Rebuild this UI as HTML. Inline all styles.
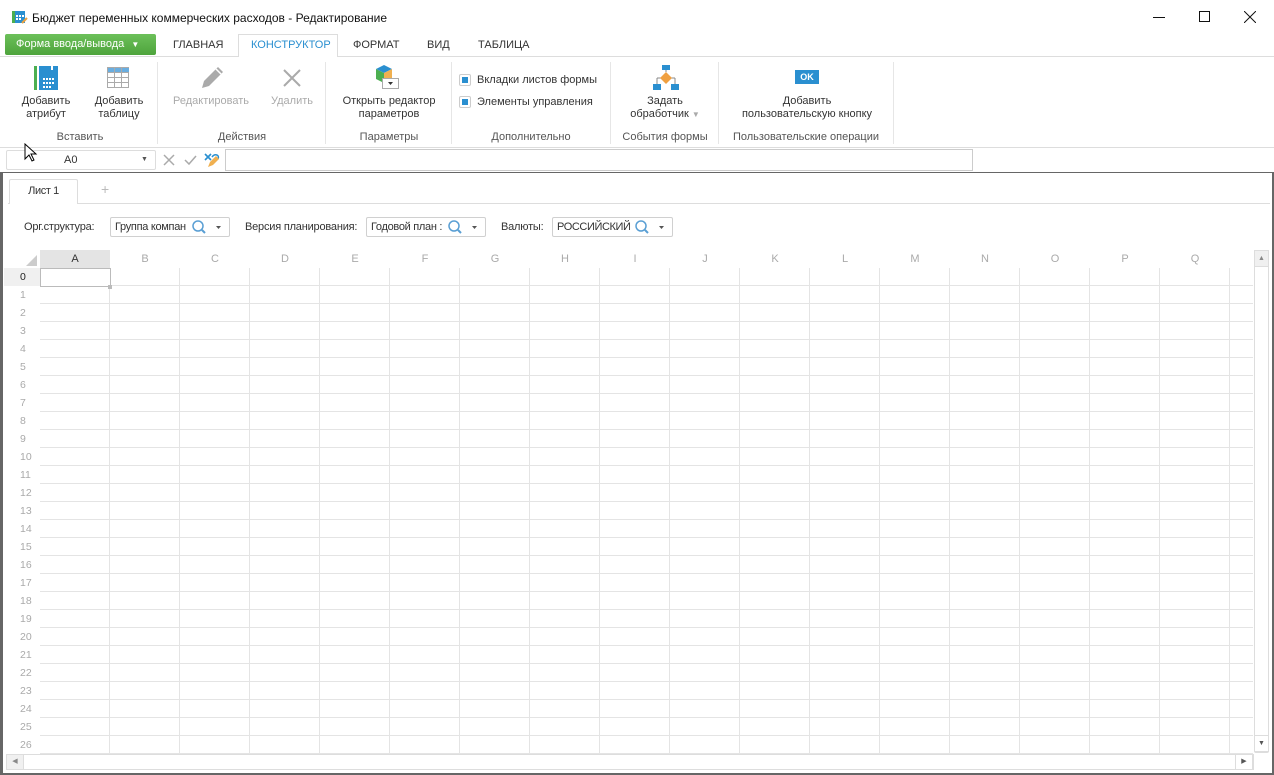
<!DOCTYPE html>
<html><head><meta charset="utf-8">
<style>
*{box-sizing:border-box;margin:0;padding:0}
body{width:1274px;height:775px;overflow:hidden;background:#fff;font-family:"Liberation Sans","DejaVu Sans",sans-serif;font-size:11px;color:#333;position:relative}
.a{position:absolute}
.t{white-space:nowrap}
.tab{position:absolute;top:39px;font-size:11px;color:#333}
.lbl{position:absolute;text-align:center;font-size:11px;color:#333;line-height:13px;white-space:nowrap}
.dis{color:#aaa}
.grp{position:absolute;top:131px;font-size:11px;color:#555;text-align:center;white-space:nowrap}
.sep{position:absolute;top:62px;width:1px;height:82px;background:#e6e6e6}
.combo{position:absolute;top:217px;height:20px;border:1px solid #d0d0d0;border-radius:2px;background:#fff;font-size:11px;line-height:18px;padding-left:4px;overflow:hidden;white-space:nowrap}
.ch{position:absolute;top:250px;height:18px;width:70px;text-align:center;line-height:18px;color:#aaa;font-size:11px}
.rh{position:absolute;left:4px;width:36px;height:18px;line-height:18px;padding-left:16px;color:#aaa;font-size:10.5px}
</style></head><body>
<svg class="a" style="left:12px;top:10px" width="16" height="14"><rect x="0" y="1" width="13" height="12" fill="#2a8fd0"/><rect x="0" y="1" width="3" height="12" fill="#4caf50"/><g fill="#fff"><rect x="4" y="5" width="2" height="2"/><rect x="7" y="5" width="2" height="2"/><rect x="10" y="5" width="2" height="2"/><rect x="4" y="8" width="2" height="2"/><rect x="7" y="8" width="2" height="2"/></g><path d="M10 13l5-5" stroke="#e8a040" stroke-width="2"/></svg>
<div class="a t" style="left:32px;top:11px;font-size:12px;color:#111">Бюджет переменных коммерческих расходов - Редактирование</div>
<div class="a" style="left:1153px;top:17px;width:12px;height:1px;background:#111"></div>
<div class="a" style="left:1199px;top:11px;width:11px;height:11px;border:1px solid #111"></div>
<svg class="a" style="left:1244px;top:11px" width="12" height="12"><path d="M0 0L12 12M12 0L0 12" stroke="#111" stroke-width="1"/></svg>
<div class="a" style="left:5px;top:34px;width:151px;height:21px;background:linear-gradient(#6cc05a,#4ea43c);border-radius:2px;color:#fff;font-size:11px;line-height:21px;padding-left:11px">Форма ввода/вывода <span style="font-size:8px;margin-left:4px">▼</span></div>
<div class="tab" style="left:173px">ГЛАВНАЯ</div>
<div class="a" style="left:238px;top:34px;width:100px;height:23px;border:1px solid #ddd;border-bottom:none;background:#fff"></div>
<div class="tab" style="left:251px;color:#2a8fd0">КОНСТРУКТОР</div>
<div class="tab" style="left:353px">ФОРМАТ</div>
<div class="tab" style="left:427px">ВИД</div>
<div class="tab" style="left:478px">ТАБЛИЦА</div>
<div class="a" style="left:0;top:56px;width:1274px;height:1px;background:#ddd"></div>
<div class="a" style="left:239px;top:56px;width:98px;height:1px;background:#fff"></div>
<svg class="a" style="left:34px;top:66px" width="26" height="24"><rect x="0" y="0" width="3" height="24" fill="#4caf50"/><path d="M5 0h12v4h2v-4h5v24h-19z" fill="#2a8fd0"/><g fill="#fff"><rect x="9" y="12" width="2" height="2"/><rect x="12" y="12" width="2" height="2"/><rect x="15" y="12" width="2" height="2"/><rect x="18" y="12" width="2" height="2"/><rect x="9" y="16" width="2" height="2"/><rect x="12" y="16" width="2" height="2"/><rect x="15" y="16" width="2" height="2"/><rect x="18" y="16" width="2" height="2"/><rect x="9" y="20" width="2" height="2"/><rect x="12" y="20" width="2" height="2"/><rect x="15" y="20" width="2" height="2"/></g></svg>
<svg class="a" style="left:107px;top:67px" width="23" height="22"><rect x="0.5" y="0.5" width="21" height="20" fill="none" stroke="#aaa"/><rect x="1" y="1" width="21" height="4" fill="#6aaee0"/><path d="M0 5.5h22M0 10.5h22M0 15.5h22M7.5 0v21M14.5 0v21" stroke="#aaa"/></svg>
<div class="lbl" style="left:16px;top:95px;width:60px">Добавить<br>атрибут</div>
<div class="lbl" style="left:89px;top:95px;width:60px">Добавить<br>таблицу</div>
<div class="grp" style="left:0;width:160px">Вставить</div>
<div class="sep" style="left:157px"></div>
<svg class="a" style="left:199px;top:65px" width="26" height="26"><path d="M3 23l2-7 14-14 5 5-14 14z" fill="#aaa"/><path d="M17 4l5 5" stroke="#fff" stroke-width="1.5"/></svg>
<svg class="a" style="left:283px;top:69px" width="18" height="18"><path d="M1 1L17 17M17 1L1 17" stroke="#aaa" stroke-width="2"/></svg>
<div class="lbl dis" style="left:168px;top:95px;width:86px">Редактировать</div>
<div class="lbl dis" style="left:264px;top:95px;width:56px">Удалить</div>
<div class="grp" style="left:158px;width:168px">Действия</div>
<div class="sep" style="left:325px"></div>
<svg class="a" style="left:375px;top:64px" width="26" height="28"><path d="M1 5l8-4 8 4-8 4z" fill="#2a8fd0"/><path d="M1 5v10l8 4v-10z" fill="#4caf50"/><path d="M17 5v10l-8 4v-10z" fill="#f0b050"/><rect x="7.5" y="14.5" width="16" height="10" fill="#fff" stroke="#aaa"/><path d="M13 18h5l-2.5 3z" fill="#333"/></svg>
<div class="lbl" style="left:332px;top:95px;width:114px">Открыть редактор<br>параметров</div>
<div class="grp" style="left:326px;width:126px">Параметры</div>
<div class="sep" style="left:451px"></div>
<div class="a" style="left:459px;top:74px;width:12px;height:12px;border:1px solid #ccc;border-radius:2px;background:#fff"><div style="margin:2px;width:6px;height:6px;background:#2a8fd0"></div></div>
<div class="a t" style="left:477px;top:74px">Вкладки листов формы</div>
<div class="a" style="left:459px;top:96px;width:12px;height:12px;border:1px solid #ccc;border-radius:2px;background:#fff"><div style="margin:2px;width:6px;height:6px;background:#2a8fd0"></div></div>
<div class="a t" style="left:477px;top:96px">Элементы управления</div>
<div class="grp" style="left:452px;width:158px">Дополнительно</div>
<div class="sep" style="left:610px"></div>
<svg class="a" style="left:652px;top:64px" width="28" height="28"><rect x="10" y="1" width="8" height="5" fill="#2a8fd0"/><path d="M14 6v2M5 14h18M5 14v6M23 14v6" stroke="#888"/><path d="M14 8l6 6-6 6-6-6z" fill="#f0a040"/><rect x="1" y="20" width="8" height="6" fill="#2a8fd0"/><rect x="19" y="20" width="8" height="6" fill="#2a8fd0"/></svg>
<div class="lbl" style="left:620px;top:95px;width:90px">Задать<br>обработчик <span style="color:#aaa;font-size:8px">▼</span></div>
<div class="grp" style="left:611px;width:108px">События формы</div>
<div class="sep" style="left:718px"></div>
<div class="a" style="left:795px;top:70px;width:24px;height:14px;background:#2a8fd0;color:#fff;font-size:9px;font-weight:bold;text-align:center;line-height:14px">OK</div>
<div class="lbl" style="left:726px;top:95px;width:162px">Добавить<br>пользовательскую кнопку</div>
<div class="grp" style="left:719px;width:174px">Пользовательские операции</div>
<div class="sep" style="left:893px"></div>
<div class="a" style="left:0;top:147px;width:1274px;height:1px;background:#ddd"></div>
<div class="a" style="left:6px;top:150px;width:150px;height:20px;border:1px solid #ddd;border-radius:2px;line-height:18px;padding-left:57px;font-size:11px">A0<span class="a" style="left:134px;top:0;font-size:7px;color:#555">▼</span></div>
<svg class="a" style="left:24px;top:143px" width="14" height="20"><path d="M1 1v15l4-4 3 6 2-1-3-6h5z" fill="#fff" stroke="#000"/></svg>
<svg class="a" style="left:163px;top:154px" width="12" height="12"><path d="M1 1L11 11M11 1L1 11" stroke="#aaa" stroke-width="1.5"/></svg>
<svg class="a" style="left:184px;top:154px" width="13" height="12"><path d="M1 6l4 4 7-8" stroke="#aaa" stroke-width="1.5" fill="none"/></svg>
<svg class="a" style="left:203px;top:151px" width="18" height="17"><path d="M2 3l6 6M8 3l-6 6" stroke="#2a8fd0" stroke-width="1.6"/><path d="M9 6c3-4 8-2 6 2" stroke="#2a8fd0" stroke-width="1.5" fill="none"/><path d="M5 16l2-5 6-6 3 3-6 6z" fill="#f0b050"/></svg>
<div class="a" style="left:225px;top:149px;width:748px;height:22px;border:1px solid #ccc"></div>
<div class="a" style="left:0;top:172px;width:1274px;height:603px;border:2px solid #666;border-top:1px solid #666;border-left:3px solid #666"></div>
<div class="a" style="left:9px;top:179px;width:69px;height:25px;border:1px solid #ddd;border-bottom:none;background:#fff;border-radius:2px 2px 0 0;text-align:center;line-height:22px;font-size:11px;letter-spacing:-0.4px">Лист 1</div>
<div class="a" style="left:101px;top:181px;color:#bbb;font-size:14px">+</div>
<div class="a" style="left:8px;top:203px;width:1262px;height:1px;background:#ddd"></div>
<div class="a" style="left:10px;top:203px;width:67px;height:1px;background:#fff"></div>
<div class="a t" style="left:24px;top:221px;letter-spacing:-0.2px">Орг.структура:</div>
<div class="combo" style="left:110px;width:120px;letter-spacing:-0.3px">Группа компан</div>
<div class="a t" style="left:245px;top:221px;letter-spacing:-0.2px">Версия планирования:</div>
<div class="combo" style="left:366px;width:120px;letter-spacing:-0.3px">Годовой план :</div>
<div class="a t" style="left:501px;top:221px;letter-spacing:-0.2px">Валюты:</div>
<div class="combo" style="left:552px;width:121px;letter-spacing:-0.4px">РОССИЙСКИЙ I</div>
<svg class="a" style="left:191px;top:219px" width="40" height="16"><circle cx="7" cy="7" r="5" fill="none" stroke="#5a9fd4" stroke-width="1.5"/><path d="M11 11l3 3" stroke="#5a9fd4" stroke-width="2"/><path d="M25 7h5l-2.5 3z" fill="#555"/></svg>
<svg class="a" style="left:447px;top:219px" width="40" height="16"><rect x="0" y="0" width="14" height="16" fill="#fff"/><circle cx="7" cy="7" r="5" fill="none" stroke="#5a9fd4" stroke-width="1.5"/><path d="M11 11l3 3" stroke="#5a9fd4" stroke-width="2"/><path d="M25 7h5l-2.5 3z" fill="#555"/></svg>
<svg class="a" style="left:634px;top:219px" width="40" height="16"><rect x="0" y="0" width="14" height="16" fill="#fff"/><circle cx="7" cy="7" r="5" fill="none" stroke="#5a9fd4" stroke-width="1.5"/><path d="M11 11l3 3" stroke="#5a9fd4" stroke-width="2"/><path d="M25 7h5l-2.5 3z" fill="#555"/></svg>
<div class="a" style="left:40px;top:268px;width:1213px;height:486px;background:repeating-linear-gradient(90deg,transparent 0 69px,#e4e4e4 69px 70px),repeating-linear-gradient(180deg,transparent 0 17px,#e4e4e4 17px 18px)"></div>
<div class="a" style="left:40px;top:250px;width:70px;height:18px;background:#e4e4e4"></div>
<svg class="a" style="left:26px;top:255px" width="12" height="12"><path d="M11 0v11h-11z" fill="#ccc"/></svg>
<div class="a" style="left:4px;top:268px;width:36px;height:18px;background:#f0f0f0"></div>
<div class="a" style="left:40px;top:268px;width:71px;height:19px;border:1px solid #bbb;background:#fff"></div>
<div class="a" style="left:108px;top:285px;width:4px;height:4px;background:#bbb"></div>
<div class="a" style="left:1254px;top:250px;width:15px;height:503px;border:1px solid #ddd;background:#fff;border-radius:2px"></div>
<div class="a" style="left:1254px;top:250px;width:15px;height:17px;border:1px solid #ddd;background:#f0f0f0;color:#888;font-size:7px;text-align:center;line-height:15px">▲</div>
<div class="a" style="left:1254px;top:735px;width:15px;height:17px;border:1px solid #ddd;background:#fff;color:#555;font-size:7px;text-align:center;line-height:15px">▼</div>
<div class="a" style="left:6px;top:754px;width:1248px;height:16px;border:1px solid #ddd;background:#fff"></div>
<div class="a" style="left:6px;top:754px;width:18px;height:16px;border:1px solid #ddd;background:#f0f0f0;color:#888;font-size:7px;text-align:center;line-height:14px">◀</div>
<div class="a" style="left:1235px;top:754px;width:18px;height:16px;border:1px solid #ddd;background:#fff;color:#555;font-size:7px;text-align:center;line-height:14px">▶</div>
<div class="ch" style="left:40px;color:#333">A</div><div class="ch" style="left:110px">B</div><div class="ch" style="left:180px">C</div><div class="ch" style="left:250px">D</div><div class="ch" style="left:320px">E</div><div class="ch" style="left:390px">F</div><div class="ch" style="left:460px">G</div><div class="ch" style="left:530px">H</div><div class="ch" style="left:600px">I</div><div class="ch" style="left:670px">J</div><div class="ch" style="left:740px">K</div><div class="ch" style="left:810px">L</div><div class="ch" style="left:880px">M</div><div class="ch" style="left:950px">N</div><div class="ch" style="left:1020px">O</div><div class="ch" style="left:1090px">P</div><div class="ch" style="left:1160px">Q</div>
<div class="rh" style="top:268px;color:#222">0</div><div class="rh" style="top:286px">1</div><div class="rh" style="top:304px">2</div><div class="rh" style="top:322px">3</div><div class="rh" style="top:340px">4</div><div class="rh" style="top:358px">5</div><div class="rh" style="top:376px">6</div><div class="rh" style="top:394px">7</div><div class="rh" style="top:412px">8</div><div class="rh" style="top:430px">9</div><div class="rh" style="top:448px">10</div><div class="rh" style="top:466px">11</div><div class="rh" style="top:484px">12</div><div class="rh" style="top:502px">13</div><div class="rh" style="top:520px">14</div><div class="rh" style="top:538px">15</div><div class="rh" style="top:556px">16</div><div class="rh" style="top:574px">17</div><div class="rh" style="top:592px">18</div><div class="rh" style="top:610px">19</div><div class="rh" style="top:628px">20</div><div class="rh" style="top:646px">21</div><div class="rh" style="top:664px">22</div><div class="rh" style="top:682px">23</div><div class="rh" style="top:700px">24</div><div class="rh" style="top:718px">25</div><div class="rh" style="top:736px">26</div>
</body></html>
